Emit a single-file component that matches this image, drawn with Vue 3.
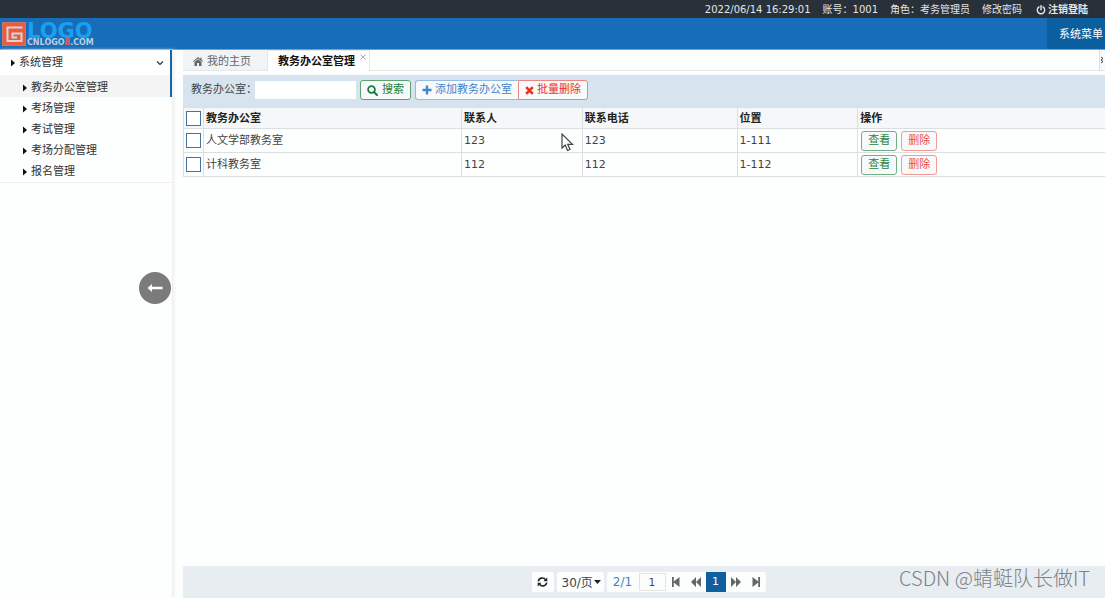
<script setup>
import { ref } from 'vue'

const menu = ['教务办公室管理', '考场管理', '考试管理', '考场分配管理', '报名管理']
const rows = [
  { office: '人文学部教务室', person: '123', phone: '123', place: '1-111' },
  { office: '计科教务室', person: '112', phone: '112', place: '1-112' }
]
const keyword = ref('')
const page = ref('1')
</script>

<template>
  <div class="app">
    <div class="topbar">
      <span>2022/06/14 16:29:01</span>
      <span>账号：1001</span>
      <span>角色：考务管理员</span>
      <a href="#">修改密码</a>
      <a href="#" class="logout">
        <svg width="10" height="10" viewBox="0 0 10 10"><path d="M3 1.9a3.7 3.7 0 1 0 4 0M5 .6v4.2" fill="none" stroke="currentColor" stroke-width="1.4" stroke-linecap="round" /></svg>注销登陆
      </a>
    </div>

    <header class="header">
      <a href="#" class="logo" aria-label="LOGO">
        <svg class="mark" width="24" height="24" viewBox="0 0 24 24">
          <rect x="0.5" y="0.5" width="23" height="23" fill="#ee5a3c" stroke="#c9766a" />
          <path d="M20.500 5.500H5.500v13.500h14v-7.500h-9v4h4.500" fill="none" stroke="#d4d6de" stroke-width="2" />
        </svg>
        <span class="words"><b>LOGO</b><small>CNLOGO<i>8</i>.COM</small></span>
      </a>
      <a href="#" class="sysmenu">系统菜单</a>
    </header>

    <div class="body">
      <aside class="sidebar">
        <button class="group" type="button">
          <svg width="4" height="8" viewBox="0 0 4 8"><path d="M0 .5 4 4 0 7.5z" fill="#111" /></svg>
          <span>系统管理</span>
          <svg class="chev" width="8" height="6" viewBox="0 0 8 6"><path d="m1 1.5 3 3 3-3" fill="none" stroke="#333" stroke-width="1.2" /></svg>
        </button>
        <nav>
          <a v-for="(item, i) in menu" :key="item" href="#" :class="{ active: i === 0 }">
            <svg width="4" height="8" viewBox="0 0 4 8"><path d="M0 .5 4 4 0 7.5z" fill="#111" /></svg>{{ item }}
          </a>
        </nav>
        <button class="collapse" type="button" aria-label="收起">
          <svg width="16" height="10" viewBox="0 0 16 10"><path d="M.5 5 5 1v2.8h10.5v2.4H5V9z" fill="#fff" /></svg>
        </button>
      </aside>

      <main class="main">
        <div class="tabs">
          <a href="#" class="tab">
            <svg width="10" height="9" viewBox="0 0 10 9"><path d="M5 0 0 4.4l.6.7L5 1.4l4.4 3.7.6-.7-1.400-1.300V.7H7.300v1.200zM5 2.200 1.500 5.100V9H4V6h2v3h2.500V5.100z" fill="#666" /></svg>我的主页
          </a>
          <a href="#" class="tab current">教务办公室管理
            <svg class="close" width="6" height="6" viewBox="0 0 6 6"><path d="m.5.5 5 5m0-5-5 5" stroke="#aaa" /></svg>
          </a>
          <button class="more" type="button" aria-label="更多"><svg width="4" height="8" viewBox="0 0 4 8"><path d="m1 1 2 1.500L1 4m0 0 2 1.500L1 7" fill="none" stroke="#444" /></svg></button>
        </div>

        <form class="toolbar" @submit.prevent>
          <label for="office">教务办公室：</label>
          <input id="office" v-model="keyword" type="text">
          <button class="btn green" type="submit">
            <svg width="11" height="11" viewBox="0 0 11 11"><circle cx="4.500" cy="4.500" r="3.400" fill="none" stroke="currentColor" stroke-width="1.800" /><path d="m7 7 3 3" stroke="currentColor" stroke-width="2" stroke-linecap="round" /></svg>搜索
          </button>
          <div class="pair">
            <button class="btn blue" type="button">
              <svg width="10" height="10" viewBox="0 0 10 10"><path d="M5 .5v9M.5 5h9" stroke="currentColor" stroke-width="2.400" /></svg>添加教务办公室
            </button>
            <button class="btn red" type="button">
              <svg width="9" height="9" viewBox="0 0 9 9"><path d="m1.200 1.200 6.600 6.600m0-6.600L1.200 7.800" stroke="currentColor" stroke-width="2.600" /></svg>批量删除
            </button>
          </div>
        </form>

        <table class="grid">
          <colgroup><col class="c0"><col class="c1"><col class="c2"><col class="c3"><col class="c2"><col></colgroup>
          <thead>
            <tr>
              <th class="check"><input type="checkbox" aria-label="全选"></th>
              <th>教务办公室</th><th>联系人</th><th>联系电话</th><th>位置</th><th>操作</th>
            </tr>
          </thead>
          <tbody>
            <tr v-for="row in rows" :key="row.office">
              <td class="check"><input type="checkbox" :aria-label="row.office"></td>
              <td>{{ row.office }}</td><td>{{ row.person }}</td><td>{{ row.phone }}</td><td>{{ row.place }}</td>
              <td><div class="ops"><button class="btn view" type="button">查看</button><button class="btn del" type="button">删除</button></div></td>
            </tr>
          </tbody>
        </table>

        <footer class="pager">
          <button class="cell refresh" type="button" aria-label="刷新">
            <svg width="11" height="10" viewBox="0 0 11 10"><path d="M1.300 4.300A4 4 0 0 1 8.500 2.700M9.700 5.700A4 4 0 0 1 2.500 7.300" fill="none" stroke="#222" stroke-width="1.600" /><path d="M10.300.4v3.900H6.500zM.7 9.600V5.700h3.800z" fill="#222" /></svg>
          </button>
          <div class="cell size">
            <select aria-label="每页条数"><option>30/页</option></select>
            <svg width="7" height="4" viewBox="0 0 7 4"><path d="M0 0h7L3.500 4z" fill="#222" /></svg>
          </div>
          <div class="strip">
            <span class="total">2/1</span>
            <input v-model="page" type="text" aria-label="页码">
            <button type="button" aria-label="首页"><svg width="8" height="10" viewBox="0 0 8 10"><path d="M0 0h1.800v4.500L7.500 0v10L1.800 5.500V10H0z" fill="#666" /></svg></button>
            <button type="button" aria-label="上一页"><svg width="10" height="10" viewBox="0 0 10 10"><path d="M5 0v10L0 5zM10 0v10L5 5z" fill="#666" /></svg></button>
            <button type="button" class="now">1</button>
            <button type="button" aria-label="下一页"><svg width="10" height="10" viewBox="0 0 10 10"><path d="m0 0 5 5-5 5zM5 0l5 5-5 5z" fill="#666" /></svg></button>
            <button type="button" aria-label="末页"><svg width="8" height="10" viewBox="0 0 8 10"><path d="M8 0H6.200v4.500L.5 0v10l5.700-4.500V10H8z" fill="#666" /></svg></button>
          </div>
        </footer>
      </main>
    </div>

    <svg class="cursor" width="13" height="19" viewBox="0 0 13 19"><path d="M1 1v14l3.200-3 2.300 5.500 2.500-1-2.300-5.200H11.500z" fill="#fff" stroke="#444" stroke-width="1.200" /></svg>
    <div class="watermark">CSDN @蜻蜓队长做IT</div>
  </div>
</template>

<style>
body { background: #fdfefe; }
</style>

<style scoped>
.app {
  position: relative;
  display: flex;
  flex-direction: column;
  min-height: 100vh;
  overflow: hidden;
  color: #444;
  font: 11px/16px "DejaVu Sans", "Noto Sans CJK SC", sans-serif;
}
.app * { box-sizing: border-box; }
a { color: inherit; text-decoration: none; }
button, input, select { margin: 0; padding: 0; border: 0; font: inherit; color: inherit; background: none; }
svg { display: block; flex: none; }

.topbar {
  display: flex;
  justify-content: flex-end;
  align-items: center;
  gap: 12px;
  height: 18px;
  padding: 1px 17px 0 0;
  background: #28303a;
  color: #e4e6e8;
  font-size: 10px;
  white-space: nowrap;
}
.logout { display: flex; align-items: center; gap: 2px; margin-left: 2px; font-weight: bold; }

.header {
  display: flex;
  justify-content: space-between;
  height: 32px;
  background: #176db8;
  border-bottom: 1px solid #69a5d5;
}
.logo { display: flex; align-items: center; gap: 1px; padding-left: 2px; }
.words { display: flex; flex-direction: column; padding-top: 2px; }
.words b { height: 16px; font-size: 21px; line-height: 16px; color: #1aa0f0; }
.words small { height: 8px; font-size: 8px; line-height: 8px; font-weight: bold; color: #b9cfe4; }
.words i { font-style: normal; color: #e8655a; }
.sysmenu { display: flex; align-items: center; width: 58px; padding: 2px 0 0 12px; background: #0c5f9f; color: #fff; white-space: nowrap; }

.body { display: flex; flex: 1; }
.sidebar { position: relative; flex: none; width: 173px; border-right: 1px solid #f0f0f0; box-shadow: 1px 0 3px #eee; color: #333; }
.group { display: flex; align-items: center; gap: 4px; width: 172px; height: 25px; padding: 1px 6px 0 11px; border-right: 2px solid #1766a6; background: #fff; }
.chev { margin-left: auto; }
.sidebar nav { padding-bottom: 1px; border-bottom: 1px solid #f0f0f0; }
.sidebar nav a { display: flex; align-items: center; gap: 4px; height: 21px; padding: 3px 0 0 23px; }
.sidebar nav a.active { height: 22px; background: #f4f4f4; border-right: 2px solid #1766a6; }
.collapse { position: absolute; top: 222px; right: 1px; display: flex; align-items: center; justify-content: center; width: 32px; height: 32px; border-radius: 50%; background: #7b7b7b; }

.main { display: flex; flex: 1; flex-direction: column; min-width: 0; padding-left: 10px; }
.tabs { display: flex; height: 21px; margin-bottom: 4px; border-bottom: 1px solid #e4e8ea; }
.tab { position: relative; display: flex; align-items: center; gap: 4px; padding: 3px 16px 0 10px; background: #f1f4f6; color: #666; white-space: nowrap; }
.tab.current { height: 21px; padding: 2px 14px 0 10px; border: 1px solid #e4e8ea; border-width: 1px 1px 0; background: #fff; color: #111; font-weight: bold; }
.close { position: absolute; top: 3px; right: 3px; }
.more { width: 6px; margin-left: auto; border-left: 1px solid #ddd; background: #f6f8f9; }

.toolbar { display: flex; align-items: center; gap: 4px; height: 32px; padding: 0 7px 3px 8px; background: #d7e4f0; }
.toolbar label { width: 60px; white-space: nowrap; }
.toolbar input { width: 101px; height: 18px; background: #fff; border-radius: 1px; }
.btn { display: flex; align-items: center; justify-content: center; gap: 4px; height: 20px; padding: 1px 6px 0; border: 1px solid; border-radius: 3px; background: #f7f9fb; white-space: nowrap; }
.green { color: #15803a; border-color: #58a46c; }
.pair { display: flex; }
.pair .btn { gap: 3px; }
.blue { color: #4285cc; border-color: #94bbe2; border-right: 0; border-radius: 3px 0 0 3px; }
.red { color: #ee2f25; border-color: #ee8580; border-radius: 0 3px 3px 0; }

.grid { width: 100%; table-layout: fixed; border-collapse: collapse; background: #fdfefe; }
.c0 { width: 20px; }
.c1 { width: 28%; }
.c2 { width: 13.1%; }
.c3 { width: 16.8%; }
.grid th, .grid td { padding: 0 0 0 2px; border: 1px solid #dcdfe2; text-align: left; white-space: nowrap; }
.grid th { height: 21px; padding-top: 2px; background: #f6f7f8; color: #222; }
.grid th.check { padding-top: 0; }
.grid td { height: 24px; }
.grid tr > :last-child { border-right: 0; }
.grid input { display: block; appearance: none; width: 15px; height: 15px; border: 1px solid #45729f; background: #fff; }
.ops { display: flex; gap: 4px; }
.ops .btn { width: 36px; }
.grid td:last-child { padding-left: 3px; }
.view { color: #2c8446; border-color: #72b083; }
.del { color: #ef5144; border-color: #f19a93; }

.pager { display: flex; align-items: center; justify-content: center; gap: 3px; height: 32px; margin-top: auto; padding-left: 9px; background: #e8edf1; }
.cell, .strip { display: flex; align-items: center; justify-content: center; height: 20px; background: #fcfdfd; border-radius: 2px; }
.refresh { width: 22px; }
.size { position: relative; width: 47px; }
.size select { appearance: none; width: 100%; height: 20px; padding: 1px 0 0 5px; font-size: 12px; }
.size svg { position: absolute; right: 3px; top: 8px; pointer-events: none; }
.total { width: 32px; text-align: center; color: #4285c0; font-size: 12px; }
.strip input { width: 27px; height: 18px; border: 1px solid #e3e3e0; text-align: center; font-size: 10px; }
.strip button { display: flex; align-items: center; justify-content: center; width: 20px; height: 20px; }
.strip .now { background: #10609f; color: #fff; }

.cursor { position: absolute; left: 561px; top: 133px; }
.watermark { position: absolute; right: 15px; bottom: 7px; font: 300 20px/26px "Noto Sans CJK SC", sans-serif; color: #7c8287; white-space: nowrap; }
</style>
